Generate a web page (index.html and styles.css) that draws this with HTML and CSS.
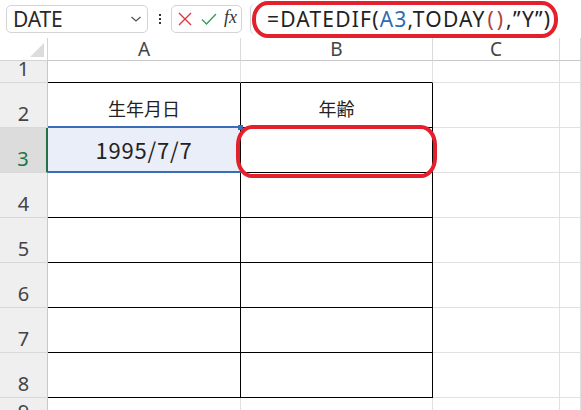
FILE: index.html
```html
<!DOCTYPE html>
<html lang="ja">

<head>
    <meta charset="UTF-8">
    <title>DATEDIF</title>
    <link rel="stylesheet" href="styles.css">
</head>

<body>

    <div class="toolbar">
        <div class="namebox">
            <span>DATE</span>
            <svg class="chevron" width="12" height="8" viewBox="0 0 12 8">
                <path d="M1.5 2 L6 6 L10.5 2" fill="none" stroke="#555" stroke-width="1.3" />
            </svg>
        </div>
        <div class="more">
            <span></span><span></span><span></span>
        </div>
        <div class="fx-buttons">
            <svg width="16" height="16" viewBox="0 0 16 16">
                <path d="M2 2 L14 14 M14 2 L2 14" stroke="#d9383f" stroke-width="1.4" />
            </svg>
            <svg width="18" height="16" viewBox="0 0 18 16">
                <path d="M2 8.5 L6.5 13 L16 3" fill="none" stroke="#3c9c5a" stroke-width="1.4" />
            </svg>
            <span class="fx">fx</span>
        </div>
        <div class="formula">=DATEDIF(<span class="ref">A3</span>,TODAY<span class="paren">()</span>,”Y”)</div>
        <div class="mark mark-formula"></div>
    </div>

    <div class="sheet">
        <div class="corner"><span class="tri"></span></div>
        <div class="colhead">A</div>
        <div class="colhead">B</div>
        <div class="colhead">C</div>
        <div class="colhead"></div>

        <div class="rowhead">1</div>
        <div class="cell top"></div>
        <div class="cell top"></div>
        <div class="cell"></div>
        <div class="cell"></div>

        <div class="rowhead">2</div>
        <div class="cell t label">生年月日</div>
        <div class="cell t label">年齢</div>
        <div class="cell"></div>
        <div class="cell"></div>

        <div class="rowhead active">3</div>
        <div class="cell t sel">1995/7/7</div>
        <div class="cell t"></div>
        <div class="cell"></div>
        <div class="cell"></div>

        <div class="rowhead">4</div>
        <div class="cell t"></div>
        <div class="cell t"></div>
        <div class="cell"></div>
        <div class="cell"></div>

        <div class="rowhead">5</div>
        <div class="cell t"></div>
        <div class="cell t"></div>
        <div class="cell"></div>
        <div class="cell"></div>

        <div class="rowhead">6</div>
        <div class="cell t"></div>
        <div class="cell t"></div>
        <div class="cell"></div>
        <div class="cell"></div>

        <div class="rowhead">7</div>
        <div class="cell t"></div>
        <div class="cell t"></div>
        <div class="cell"></div>
        <div class="cell"></div>

        <div class="rowhead">8</div>
        <div class="cell t"></div>
        <div class="cell t"></div>
        <div class="cell"></div>
        <div class="cell"></div>

        <div class="rowhead last">9</div>
        <div class="cell"></div>
        <div class="cell"></div>
        <div class="cell"></div>
        <div class="cell"></div>

        <div class="mark mark-cell"></div>
    </div>

</body>

</html>
```

FILE: styles.css
```css
* {
    margin: 0;
    padding: 0;
    box-sizing: border-box;
}

body {
    font-family: "Noto Sans", "Noto Sans CJK JP", sans-serif;
    background-color: #fff;
    color: #222;
    width: 581px;
    height: 410px;
    overflow: hidden;
}

/* Formula bar */
.toolbar {
    position: relative;
    height: 38px;
    display: flex;
    align-items: center;
    padding-left: 6px;
}

.namebox {
    width: 142px;
    height: 28px;
    border: 1px solid #d4d4d4;
    border-radius: 5px;
    display: flex;
    align-items: center;
    justify-content: space-between;
    padding: 0 5px 0 6px;
    font-size: 21px;
    letter-spacing: -0.2px;
    color: #2a2a2a;
}

.more {
    width: 23px;
    display: flex;
    flex-direction: column;
    align-items: center;
    gap: 2px;
}

.more span {
    width: 2px;
    height: 2px;
    background-color: #333;
}

.fx-buttons {
    width: 71px;
    height: 28px;
    border: 1px solid #d4d4d4;
    border-radius: 5px;
    display: flex;
    align-items: center;
    justify-content: space-between;
    padding: 0 4px 0 5px;
}

.fx {
    font-family: "Liberation Serif", serif;
    font-style: italic;
    font-size: 18px;
    color: #333;
    margin-top: -3px;
}

.formula {
    flex: 1;
    height: 32px;
    margin-left: 8px;
    border-left: 1px solid #d4d4d4;
    border-radius: 6px 0 0 6px;
    padding-left: 16px;
    display: flex;
    align-items: center;
    font-size: 21px;
    letter-spacing: 1.2px;
    color: #222;
    white-space: nowrap;
}

.formula .ref {
    color: #2d6bb3;
}

.formula .paren {
    color: #b0413e;
    letter-spacing: 3px;
    padding-left: 2px;
}

/* Red marker ovals */
.mark {
    position: absolute;
    border: 4px solid #e3202b;
    pointer-events: none;
}

.mark-formula {
    left: 252px;
    top: 1px;
    width: 306px;
    height: 37px;
    border-radius: 16px / 18px;
}

.mark-cell {
    left: 236px;
    top: 87px;
    width: 201px;
    height: 53px;
    border-radius: 16px / 20px;
}

/* Grid */
.sheet {
    position: relative;
    display: grid;
    grid-template-columns: 48px 193px 192px 127px 1fr;
    grid-template-rows: 23px 22px 45px 45px 45px 45px 45px 45px 45px 22px;
    height: 372px;
    overflow: hidden;
}

.corner {
    position: relative;
    border-right: 1px solid #d4d4d4;
    border-bottom: 1px solid #d4d4d4;
}

.tri {
    position: absolute;
    right: 3px;
    bottom: 3px;
    width: 0;
    height: 0;
    border-left: 14px solid transparent;
    border-bottom: 14px solid #dcdcdc;
}

.colhead {
    border-right: 1px solid #dadada;
    border-bottom: 1px solid #c8c8c8;
    display: flex;
    align-items: center;
    justify-content: center;
    font-size: 19px;
    line-height: 1;
    color: #444;
}

.rowhead {
    background-color: #efefef;
    border-right: 1px solid #c8c8c8;
    border-bottom: 1px solid #d8d8d8;
    display: flex;
    align-items: flex-end;
    justify-content: center;
    font-size: 20px;
    line-height: 1;
    color: #444;
    padding-bottom: 3px;
}

.rowhead.last {
    align-items: flex-start;
    padding: 4px 0 0;
}

.rowhead.active {
    background-color: #dcdcdc;
    color: #217346;
    border-right: 2px solid #217346;
}

.cell {
    border-right: 1px solid #e1e1e1;
    border-bottom: 1px solid #e1e1e1;
    display: flex;
    align-items: flex-end;
    justify-content: center;
    font-family: "Noto Sans CJK JP", sans-serif;
    line-height: 1;
}

.cell.top {
    border-bottom-color: #000;
}

.cell.t {
    border-right-color: #000;
    border-bottom-color: #000;
}

.label {
    font-size: 18px;
    padding-bottom: 10px;
}

.sel {
    position: relative;
    background-color: #e9eef8;
    font-size: 22px;
    letter-spacing: 0.8px;
    padding-bottom: 12px;
    color: #222;
}

.sel::before {
    content: "";
    position: absolute;
    left: 0;
    right: -1px;
    top: -2px;
    bottom: -1px;
    border-top: 2px solid #3a6cb7;
    border-bottom: 2px solid #3a6cb7;
}

.sel::after {
    content: "";
    position: absolute;
    right: -3px;
    top: -3px;
    width: 5px;
    height: 5px;
    background-color: #3a6cb7;
}
```
